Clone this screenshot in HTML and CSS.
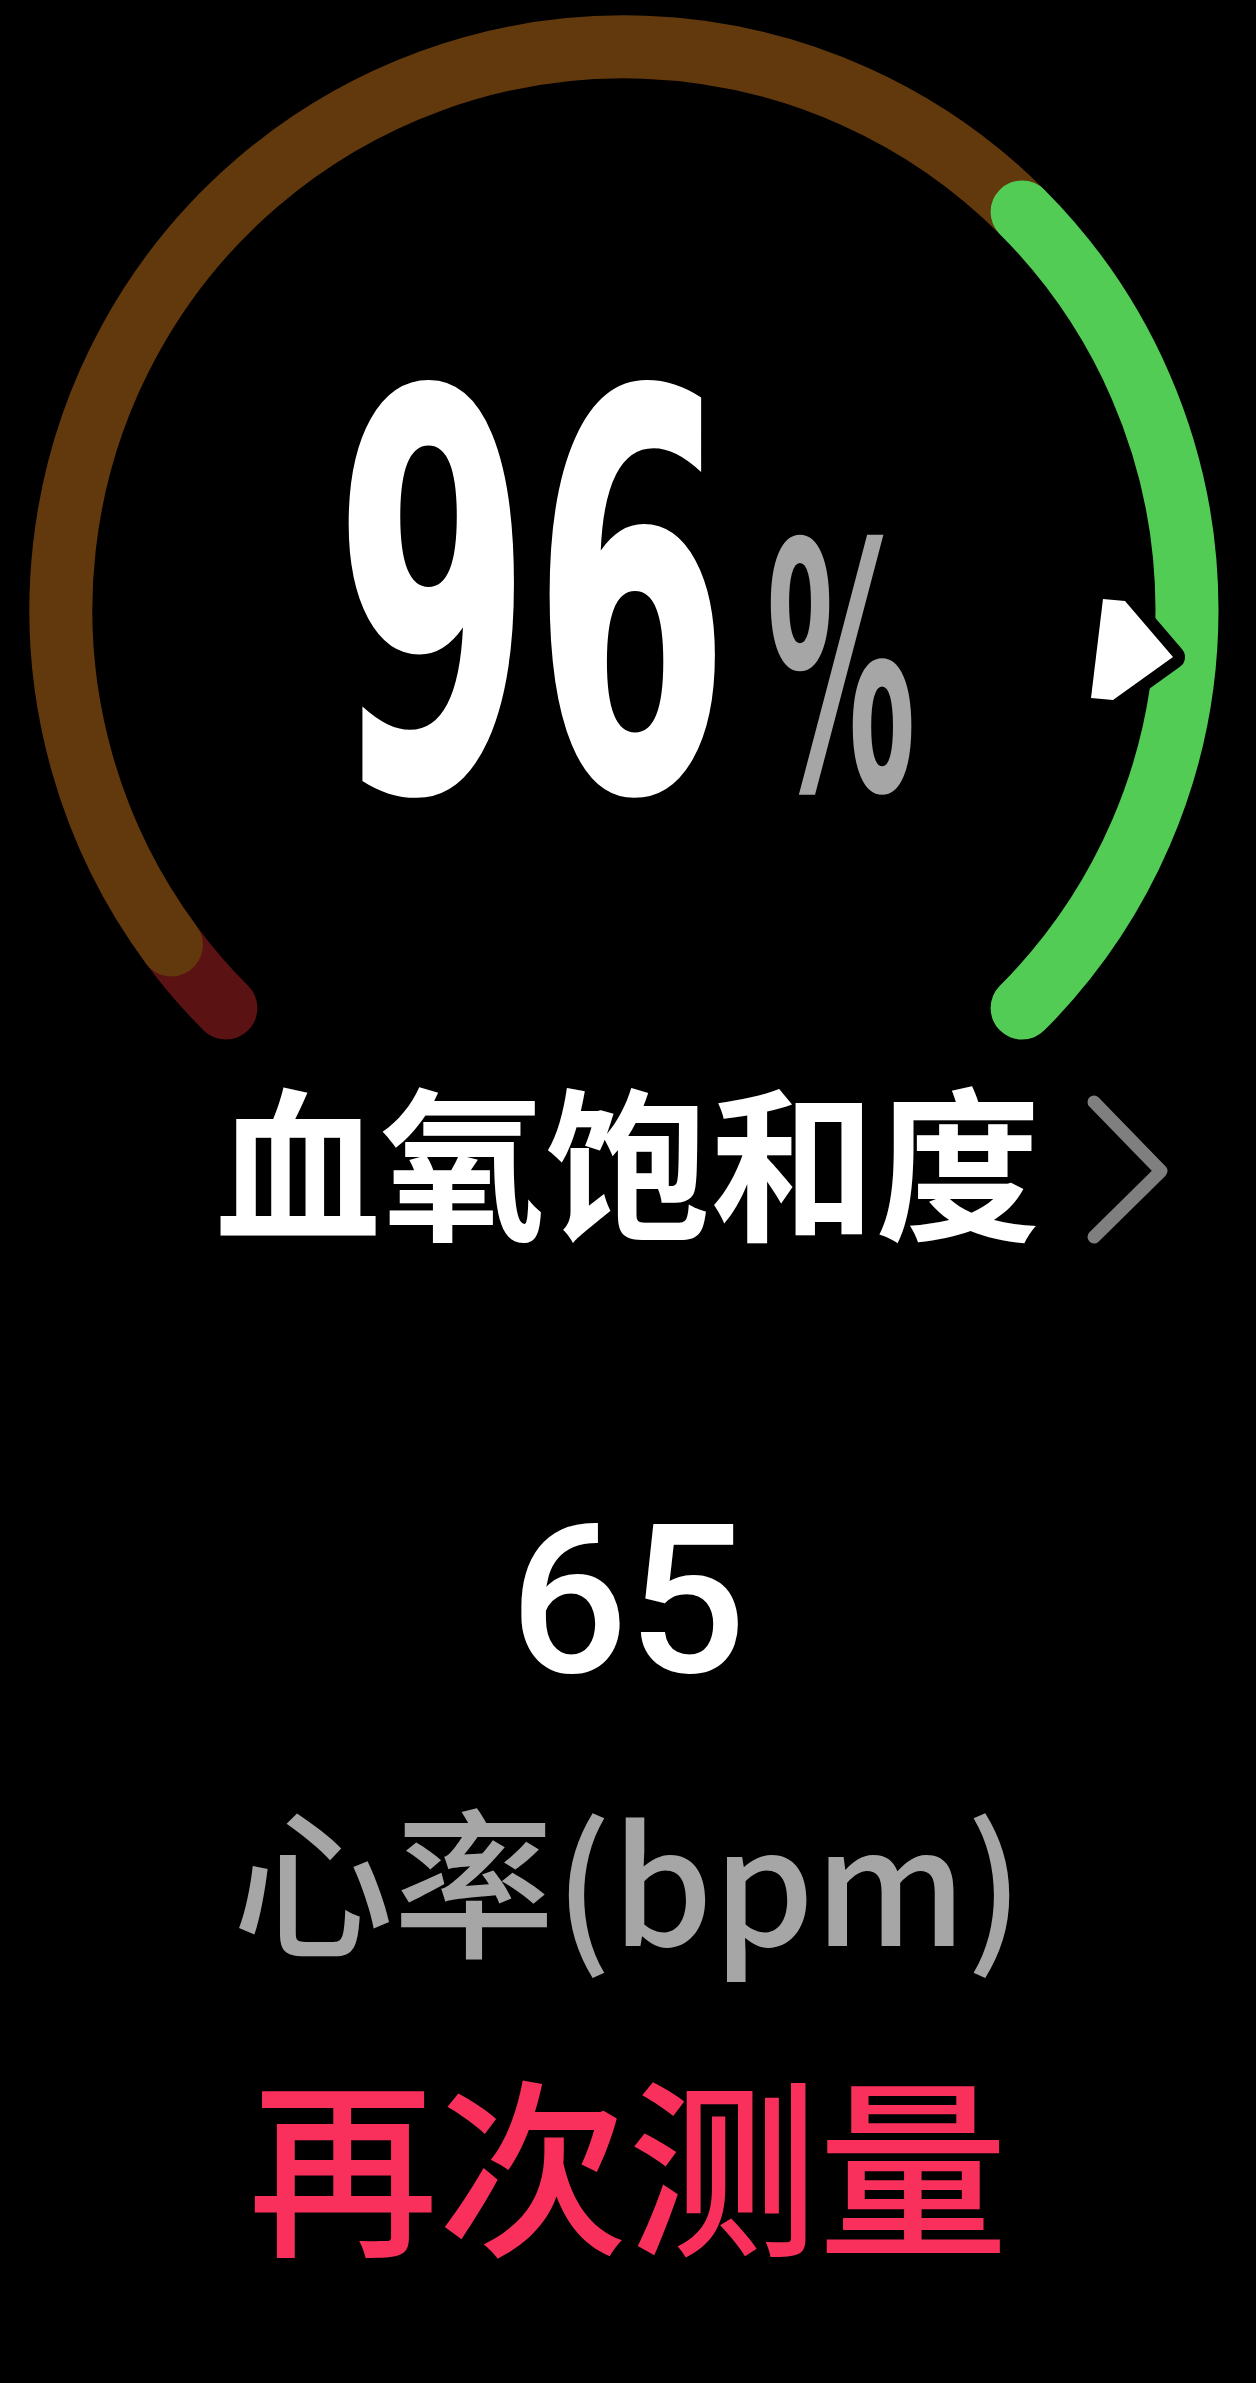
FILE: index.html
```html
<!DOCTYPE html>
<html lang="zh-CN">
<head>
<meta charset="utf-8">
<title>血氧饱和度</title>
<link rel="stylesheet" href="styles.css">
</head>
<body>
<main class="screen">
  <section class="gauge">
    <svg class="gauge-art" viewBox="0 0 1256 1060" width="1256" height="1060" aria-hidden="true">
      <path class="arc arc-low" d="M 225.9 1008.1 A 563 563 0 0 1 171.4 944.9"/>
      <path class="arc arc-mid" d="M 171.4 944.9 A 563 563 0 0 1 1022.1 211.9"/>
      <path class="arc arc-high" d="M 1022.1 211.9 A 563 563 0 0 1 1022.1 1008.1"/>
      <polygon class="pointer" points="1103,599 1125,601 1173,657 1113,700 1091,698"/>
    </svg>
    <div class="value">
      <span class="num-box"><span class="num">96</span></span>
      <span class="pct-box"><span class="pct">%</span></span>
    </div>
  </section>

  <div class="title-row">
    <span class="spacer"></span>
    <h1 class="title">血氧饱和度</h1>
    <svg class="chevron" viewBox="0 0 95 160" width="95" height="160" aria-hidden="true">
      <polyline points="13,12 80,81 13,147"/>
    </svg>
  </div>

  <div class="hr-value">65</div>
  <div class="hr-label">心率(bpm)</div>
  <div class="retry">再次测量</div>
</main>
</body>
</html>
```

FILE: styles.css
```css
html, body {
  margin: 0;
  padding: 0;
  background: #000;
}

.screen {
  width: 1256px;
  min-height: 2383px;
  background: #000;
  display: flex;
  flex-direction: column;
  align-items: center;
  font-family: "Noto Sans CJK SC", "Noto Sans", sans-serif;
}

.gauge {
  width: 1256px;
  height: 1060px;
  flex: none;
  display: grid;
}

.gauge > * {
  grid-area: 1 / 1;
}

.gauge-art {
  display: block;
}

.arc {
  fill: none;
  stroke-width: 63;
  stroke-linecap: round;
}

.arc-low { stroke: #5a1213; }
.arc-mid { stroke: #62390c; }
.arc-high { stroke: #52cc55; }

.pointer {
  fill: #fff;
  stroke: #000;
  stroke-width: 24;
  stroke-linejoin: round;
  paint-order: stroke;
}

.value {
  align-self: start;
  display: flex;
  align-items: baseline;
  padding-top: 322px;
  padding-left: 334px;
  font-family: "DejaVu Sans Condensed", "DejaVu Sans", sans-serif;
  font-weight: 700;
  line-height: 1;
}

.num-box {
  display: inline-block;
  width: 396px;
  white-space: nowrap;
}

.num {
  display: inline-block;
  font-size: 553px;
  color: #fff;
  transform: scaleX(0.572);
  transform-origin: left center;
}

.pct-box {
  display: inline-block;
  width: 150px;
  margin-left: 36px;
  white-space: nowrap;
}

.pct {
  display: inline-block;
  font-size: 344px;
  color: #a6a6a6;
  transform: scaleX(0.484);
  transform-origin: left center;
}

.title-row {
  width: 1256px;
  flex: none;
  margin-top: 14px;
  display: grid;
  grid-template-columns: 1fr auto 1fr;
  align-items: start;
}

.title {
  margin: 0;
  font-size: 165px;
  line-height: 1;
  font-weight: 700;
  color: #fff;
  white-space: nowrap;
}

.chevron {
  justify-self: start;
  margin-left: 40px;
  margin-top: 16px;
  fill: none;
  stroke: #7f7f7f;
  stroke-width: 13;
  stroke-linecap: round;
  stroke-linejoin: round;
}

.hr-value {
  flex: none;
  margin-top: 247px;
  font-family: Roboto, "Noto Sans", sans-serif;
  font-weight: 500;
  font-size: 208px;
  line-height: 1;
  color: #fff;
}

.hr-label {
  flex: none;
  margin-top: 90px;
  font-size: 161px;
  line-height: 1;
  font-weight: 500;
  color: #a6a6a6;
  white-space: nowrap;
}

.retry {
  flex: none;
  margin-top: 108px;
  font-size: 190px;
  line-height: 1;
  font-weight: 500;
  color: #f9305c;
  white-space: nowrap;
}
```
